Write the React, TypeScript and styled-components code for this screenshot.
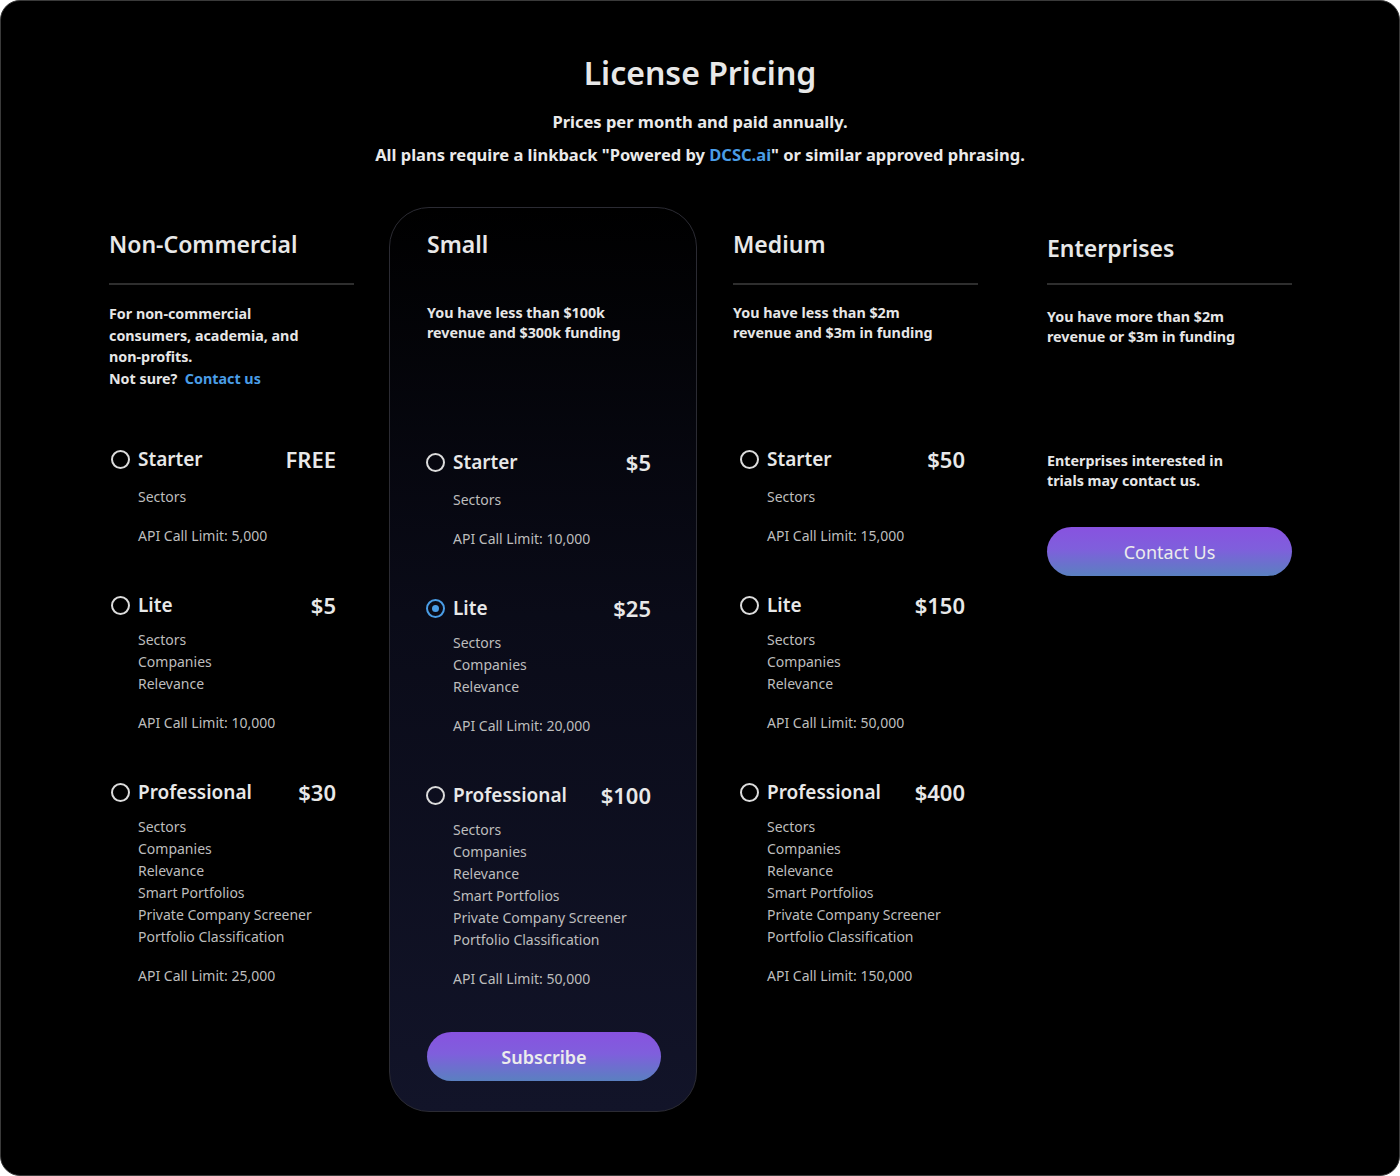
import React from "react";
import styled, { createGlobalStyle } from "styled-components";

const Global = createGlobalStyle`
  html, body { margin: 0; padding: 0; background: #ffffff; }
  body { font-family: "Noto Sans", "Open Sans", sans-serif; }
  * { box-sizing: border-box; }
`;

const Page = styled.div`
  width: 1400px;
  height: 1176px;
  background: #000;
  border-radius: 20px;
  border: 1px solid #3a3a3a;
  color: #e6e6e6;
  padding-top: 50px;
  overflow: hidden;
`;

const Header = styled.header`
  text-align: center;
`;

const Title = styled.h1`
  margin: 0;
  font-size: 32px;
  line-height: 44px;
  font-weight: 600;
  color: #e8e8e8;
`;

const Sub = styled.p`
  margin: 0;
  font-size: 16.5px;
  line-height: 33px;
  font-weight: 700;
  color: #eaeaea;
  &:first-of-type { margin-top: 10px; }
`;

const Link = styled.a`
  color: #4a9de6;
  text-decoration: none;
`;

const Columns = styled.div`
  display: flex;
  align-items: flex-start;
  margin-top: 36px;
  padding-left: 108px;
`;

const Column = styled.section<{ $gapBefore: number }>`
  width: 245px;
  margin-left: ${(p) => p.$gapBefore}px;
  padding-top: 22px;
`;

const Card = styled.section<{ $gapBefore: number }>`
  width: 308px;
  height: 905px;
  margin-left: ${(p) => p.$gapBefore}px;
  padding: 21px 37px 0 37px;
  border: 1px solid #2b2b33;
  border-radius: 40px;
  background: linear-gradient(180deg, #000000 0%, #0a0b18 45%, #121429 100%);
  display: flex;
  flex-direction: column;
`;

const Heading = styled.h2<{ $offset?: number }>`
  margin: ${(p) => p.$offset || 0}px 0 0 0;
  font-size: 23px;
  line-height: 30px;
  font-weight: 600;
  color: #e8e8e8;
`;

const Divider = styled.hr<{ $hidden?: boolean; $offset?: number }>`
  margin: ${(p) => 24 - (p.$offset || 0)}px 0 0 0;
  border: none;
  height: 2px;
  background: ${(p) => (p.$hidden ? "transparent" : "#2e2e2e")};
`;

const Desc = styled.div<{ $height: number; $top?: number }>`
  margin-top: ${(p) => p.$top ?? 18}px;
  min-height: ${(p) => p.$height}px;
  font-size: 14.3px;
  font-weight: 700;
  line-height: 20px;
  color: #e6e6e6;
`;

const DescLoose = styled(Desc)`
  line-height: 21.7px;
`;

const PlanList = styled.div<{ $shift: number }>`
  display: flex;
  flex-direction: column;
  gap: 44px;
  margin-left: ${(p) => p.$shift}px;
`;

const Plan = styled.div`
  width: 225px;
`;

const PlanRow = styled.label`
  display: flex;
  align-items: center;
  height: 28px;
  cursor: pointer;
`;

const Radio = styled.span<{ $checked?: boolean }>`
  width: 19px;
  height: 19px;
  border-radius: 50%;
  border: 2px solid ${(p) => (p.$checked ? "#4a9de6" : "#dcdcdc")};
  display: flex;
  align-items: center;
  justify-content: center;
  flex-shrink: 0;
  &::after {
    content: "";
    width: 7px;
    height: 7px;
    border-radius: 50%;
    background: ${(p) => (p.$checked ? "#4a9de6" : "transparent")};
  }
`;

const PlanName = styled.span`
  margin-left: 8px;
  font-size: 19px;
  font-weight: 600;
  color: #e8e8e8;
  flex: 1;
`;

const Price = styled.span`
  font-size: 22px;
  font-weight: 600;
  color: #e8e8e8;
`;

const Features = styled.ul<{ $first?: boolean }>`
  list-style: none;
  margin: ${(p) => (p.$first ? 13 : 10)}px 0 0 27px;
  padding: 0;
  font-size: 14px;
  line-height: 22px;
  color: #bdbdbd;
`;

const Limit = styled.li`
  margin-top: 17px;
`;

const GradientButton = styled.button<{ $bold?: boolean }>`
  height: 49px;
  border: none;
  border-radius: 25px;
  background: linear-gradient(180deg, #8852e0 0%, #7f5fdc 45%, #5a80c0 100%);
  color: #ececec;
  font-family: "Noto Sans", "Open Sans", sans-serif;
  font-size: 18px;
  font-weight: ${(p) => (p.$bold ? 600 : 400)};
  cursor: pointer;
`;

const Subscribe = styled(GradientButton)`
  margin-top: 42px;
  width: 234px;
  height: 49px;
`;

const ContactButton = styled(GradientButton)`
  width: 245px;
  margin-top: 36px;
`;

const TrialText = styled.p`
  margin: 0;
  font-size: 14.3px;
  font-weight: 700;
  line-height: 20px;
  color: #e6e6e6;
`;

type PlanData = { name: string; price: string; features: string[]; limit: string };

const featuresFor = (n: number) =>
  [
    "Sectors",
    "Companies",
    "Relevance",
    "Smart Portfolios",
    "Private Company Screener",
    "Portfolio Classification",
  ].slice(0, n);

const makePlans = (prices: string[], limits: string[]): PlanData[] => [
  { name: "Starter", price: prices[0], features: featuresFor(1), limit: limits[0] },
  { name: "Lite", price: prices[1], features: featuresFor(3), limit: limits[1] },
  { name: "Professional", price: prices[2], features: featuresFor(6), limit: limits[2] },
];

const Plans: React.FC<{ plans: PlanData[]; selected?: string; shift: number }> = ({
  plans,
  selected,
  shift,
}) => (
  <PlanList $shift={shift}>
    {plans.map((p, i) => (
      <Plan key={p.name}>
        <PlanRow>
          <Radio $checked={selected === p.name} />
          <PlanName>{p.name}</PlanName>
          <Price>{p.price}</Price>
        </PlanRow>
        <Features $first={i === 0}>
          {p.features.map((f) => (
            <li key={f}>{f}</li>
          ))}
          <Limit>API Call Limit: {p.limit}</Limit>
        </Features>
      </Plan>
    ))}
  </PlanList>
);

export default function App() {
  return (
    <>
      <Global />
      <Page>
        <Header>
          <Title>License Pricing</Title>
          <Sub>Prices per month and paid annually.</Sub>
          <Sub>
            All plans require a linkback "Powered by <Link href="#">DCSC.ai</Link>" or similar approved phrasing.
          </Sub>
        </Header>
        <Columns>
          <Column $gapBefore={0}>
            <Heading>Non-Commercial</Heading>
            <Divider />
            <DescLoose $height={142}>
              For non-commercial
              <br />
              consumers, academia, and
              <br />
              non-profits.
              <br />
              Not sure?&nbsp; <Link href="#">Contact us</Link>
            </DescLoose>
            <Plans shift={2} plans={makePlans(["FREE", "$5", "$30"], ["5,000", "10,000", "25,000"])} />
          </Column>
          <Card $gapBefore={35}>
            <Heading>Small</Heading>
            <Divider $hidden />
            <Desc $height={145}>
              You have less than $100k
              <br />
              revenue and $300k funding
            </Desc>
            <Plans
              shift={-1}
              plans={makePlans(["$5", "$25", "$100"], ["10,000", "20,000", "50,000"])}
              selected="Lite"
            />
            <Subscribe $bold>Subscribe</Subscribe>
          </Card>
          <Column $gapBefore={36}>
            <Heading>Medium</Heading>
            <Divider />
            <Desc $height={142}>
              You have less than $2m
              <br />
              revenue and $3m in funding
            </Desc>
            <Plans shift={7} plans={makePlans(["$50", "$150", "$400"], ["15,000", "50,000", "150,000"])} />
          </Column>
          <Column $gapBefore={69}>
            <Heading $offset={4}>Enterprises</Heading>
            <Divider $offset={4} />
            <Desc $height={144} $top={22}>
              You have more than $2m
              <br />
              revenue or $3m in funding
            </Desc>
            <TrialText>
              Enterprises interested in
              <br />
              trials may contact us.
            </TrialText>
            <ContactButton>Contact Us</ContactButton>
          </Column>
        </Columns>
      </Page>
    </>
  );
}
